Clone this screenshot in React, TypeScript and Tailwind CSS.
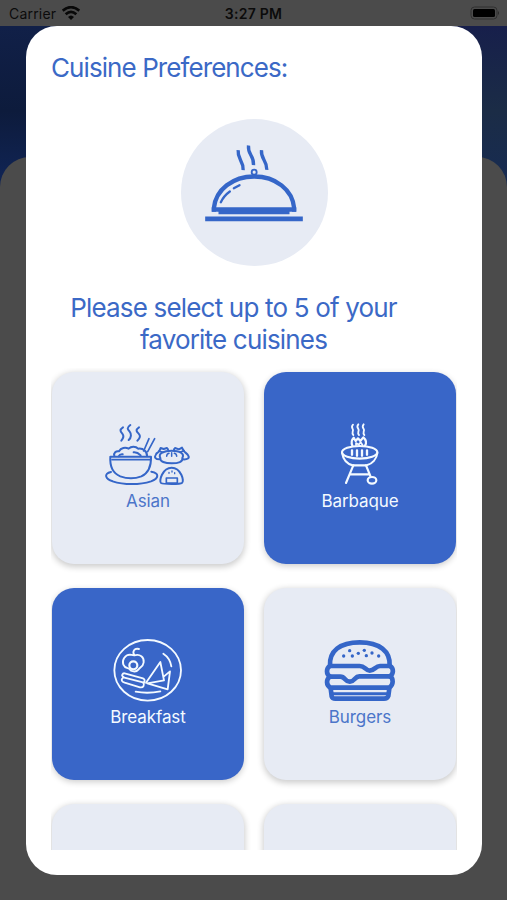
import type { ReactNode } from "react";

function StatusBar() {
  return (
    <header className="flex h-[26px] items-center bg-[#4b4b4b] px-[9px] text-[#0b0b0b]">
      <div className="flex flex-1 items-center gap-[6px] pt-[2px]">
        <span className="text-[14px] leading-4 tracking-[0.2px]">Carrier</span>
        <svg className="-mt-0.5" width="18" height="14" viewBox="0 0 54 42" fill="none" stroke="#080808" strokeWidth="8">
          <path d="M2 14Q27-7 52 14" />
          <path d="M11 25Q27 10 43 25" />
          <path d="M27 42L18 33Q27 24 36 33Z" fill="#080808" stroke="none" />
        </svg>
      </div>
      <span className="pt-[2px] text-[14px] font-semibold leading-4 tracking-[0.25px]">3:27 PM</span>
      <div className="flex flex-1 justify-end">
        <svg className="-mr-0.5" width="30" height="14" viewBox="0 0 30 14">
          <rect x="1" y="1" width="26" height="12" rx="3.5" fill="none" stroke="#303030" />
          <rect x="3" y="3" width="22" height="8" rx="1.5" fill="#000" />
          <path d="M28 5Q30 7 28 9Z" fill="#292929" />
        </svg>
      </div>
    </header>
  );
}

function ClocheBadge() {
  return (
    <div className="mt-[36px] flex size-[147px] items-center justify-center rounded-full bg-[#e7ebf4]">
      <svg width="147" height="147" viewBox="31.5 28.5 441 441" fill="none" stroke="#3566c8">
        <g strokeWidth="10">
          <path d="M203 122C200 150 219 151 218 182" />
          <path d="M234 108C231 138 251 136 249 167" />
          <path d="M273 122C270 150 290 151 289 181" />
        </g>
        <circle cx="251" cy="188" r="7.5" strokeWidth="5.5" />
        <path d="M130 307V296C136 240 187 201 251 201S366 240 371 296V307" strokeWidth="13" />
        <path d="M124 300H377" strokeWidth="13" />
        <path d="M144 308H357" strokeWidth="13" />
        <path d="M104 328H397" strokeWidth="14" />
        <path d="M151 278Q160 259 178 246M190 236L207 227" strokeWidth="7" strokeLinecap="round" />
      </svg>
    </div>
  );
}

function AsianIcon() {
  return (
    <svg width="110" height="75" viewBox="-6 0 330 225" fill="none" stroke="#3566c8" strokeWidth="6" strokeLinecap="round" strokeLinejoin="round">
      <path d="M84 37C72 45 77 50 82 56S86 69 79 77M106 30C93 39 99 44 104 50S110 67 101 75M132 37C120 45 125 50 131 56S136 69 127 77" />
      <path d="M146 108L162 71M158 110L179 71" strokeWidth="5" />
      <path d="M46 125H168C169 157 158 175 139 184Q108 196 76 184C54 175 44 155 46 125Z" />
      <path d="M51 134H164" strokeWidth="5" />
      <path d="M58 123C55 114 63 107 72 109C78 98 91 96 101 101C109 93 122 94 130 101C145 99 157 110 156 123" />
      <path d="M71 124Q74 117 83 118M116 112Q127 111 137 121" />
      <path d="M48 171C24 176 32 193 53 199C86 210 135 210 168 199C193 190 193 174 169 170" />
      <path d="M196 129C188 115 207 107 230 107S270 115 262 129C265 140 250 145 230 145S194 140 196 129Z" />
      <path d="M193 133C182 133 177 127 182 120C185 112 191 113 193 108L197 99L206 102L216 99L219 103M264 133C278 134 284 129 280 122C276 114 268 112 266 107L261 98L252 103L240 99L237 103" />
      <path d="M191 108L204 112M256 111L267 107" strokeWidth="5" />
      <path d="M215 124Q215 117 222 115M230 124V113M245 124Q245 117 238 115" strokeWidth="4.5" />
      <path d="M198 204C191 199 202 158 230 158S269 199 261 204Q257 207 230 207T198 204Z" />
      <path d="M214 204V189H247V204Z" strokeWidth="5" />
      <path d="M222 172V175M231 168V171M239 173V176" strokeWidth="4" />
    </svg>
  );
}

function BarbecueIcon() {
  return (
    <svg width="110" height="75" viewBox="-15 0 330 225" fill="none" stroke="#f4faff" strokeWidth="6.5" strokeLinecap="round" strokeLinejoin="round">
      <path d="M129 29C121 37 130 41 129 46S125 55 130 60M145 28C137 37 147 41 146 46S142 55 147 60M161 28C153 37 163 41 162 46S158 55 163 60" strokeWidth="5.5" />
      <path d="M127 92C123 82 126 73 131 68L137 78L144 70L151 78L160 67C169 75 170 84 165 92" />
      <path d="M138 91V84L146 89L152 82L158 91" strokeWidth="5" />
      <ellipse cx="149" cy="112" rx="53" ry="19" />
      <path d="M97 116C99 134 112 147 128 151H170C187 146 200 132 202 114" />
      <path d="M126 106V119M141 106V122M156 106V122M171 106V119" strokeWidth="7" />
      <path d="M130 151L108 204M168 151L181 183M120 178H178" />
      <ellipse cx="186" cy="196" rx="13" ry="10" />
    </svg>
  );
}

function BreakfastIcon() {
  return (
    <svg width="110" height="75" viewBox="-21 3 330 225" fill="none" stroke="#f4faff" strokeWidth="5.5" strokeLinecap="round" strokeLinejoin="round">
      <ellipse cx="143" cy="121" rx="100" ry="91" />
      <path d="M117 57C103 53 96 65 103 76C120 71 133 81 131 97C129 111 121 110 115 119C108 128 93 125 88 117C86 112 75 117 70 104C65 89 75 75 90 74L103 76" />
      <circle cx="100" cy="106" r="12" strokeWidth="6.5" />
      <path d="M74 130L129 145Q137 148 132 158L73 143Q64 138 67 134Q69 129 74 130Z" />
      <path d="M69 143C61 149 66 155 74 158L120 172C131 174 134 164 130 158" />
      <path d="M138 158L181 96L192 151L142 160L203 178L210 124L192 139" />
      <path d="M190 71Q210 84 214 109M107 185Q143 192 181 184" />
    </svg>
  );
}

const seeds = [[101, 78], [119, 62], [127, 78], [145, 70], [163, 61], [169, 77], [186, 69], [206, 78]];

function BurgerIcon() {
  return (
    <svg width="110" height="75" viewBox="-15 3 330 225" fill="none" stroke="#3566c8" strokeWidth="14" strokeLinecap="round" strokeLinejoin="round">
      <path d="M60 108C57 63 90 37 149 37S242 63 239 108" />
      <path d="M60 108H149C165 108 167 122 179 122C193 122 196 108 210 108H240C252 115 251 132 240 139H148C134 139 134 155 120 155C104 156 107 140 91 140H60C48 133 48 115 60 108Z" />
      <path d="M60 140C48 148 48 165 61 173H238C251 164 251 146 240 139" />
      <path d="M62 175L65 199Q67 206 76 206H222Q232 206 235 198L238 175" />
      <path d="M66 191H234" strokeWidth="9" />
      <g fill="#3566c8" stroke="none">
        {seeds.map(([x, y]) => <circle key={x} cx={x} cy={y} r="5" />)}
      </g>
    </svg>
  );
}

function CuisineCard({ label, selected = false, children }: { label?: string; selected?: boolean; children?: ReactNode }) {
  const tone = selected
    ? "bg-[#3966c8] text-[#f4faff] shadow-[0_2px_6px_rgba(0,0,0,0.2)]"
    : "bg-[#e7ebf4] text-[#4c75c9] shadow-[0_2px_6px_1px_rgba(0,0,0,0.2)]";
  return (
    <button className={`flex h-48 w-48 flex-col items-center rounded-[22px] pt-[43px] ${tone}`}>
      {children}
      <span className="text-[17px] leading-[22px] tracking-[-0.1px]">{label}</span>
    </button>
  );
}

export default function App() {
  return (
    <div className="relative h-[900px] w-full overflow-hidden bg-[#4b4b4b] font-['Inter','Liberation_Sans',sans-serif]">
      <StatusBar />
      <div className="flex h-[170px] justify-between">
        <div className="w-[253px] bg-linear-to-b from-[#112048] via-[#0d1b3c] to-[#11265a]" />
        <div className="w-[254px] bg-linear-to-b from-[#171f4b] via-[#1b2c46] to-[#162b54]" />
      </div>
      <div className="relative -mt-[39px] h-[743px] rounded-t-[30px] bg-[#4b4b4b]" />
      <main className="absolute left-[26px] top-[26px] flex h-[849px] w-[456px] flex-col rounded-[31px] bg-white px-[25px] text-[#3b69c6]">
        <h1 className="mt-[25px] whitespace-nowrap text-[26px] leading-[34px] tracking-[-0.92px]">Cuisine Preferences:</h1>
        <div className="-mt-0.5 flex justify-center">
          <ClocheBadge />
        </div>
        <p className="mt-[26px] w-[365px] whitespace-nowrap text-center text-[26px] leading-8 tracking-[-0.82px]">
          Please select up to 5 of your
          <br />
          favorite cuisines
        </p>
        <section className="mt-[12px] grid h-[482px] shrink-0 grid-cols-[192px_192px] content-start gap-x-5 gap-y-6 overflow-hidden pl-px pt-[4px]">
          <CuisineCard label="Asian"><AsianIcon /></CuisineCard>
          <CuisineCard label="Barbaque" selected><BarbecueIcon /></CuisineCard>
          <CuisineCard label="Breakfast" selected><BreakfastIcon /></CuisineCard>
          <CuisineCard label="Burgers"><BurgerIcon /></CuisineCard>
          <CuisineCard />
          <CuisineCard />
        </section>
      </main>
    </div>
  );
}
